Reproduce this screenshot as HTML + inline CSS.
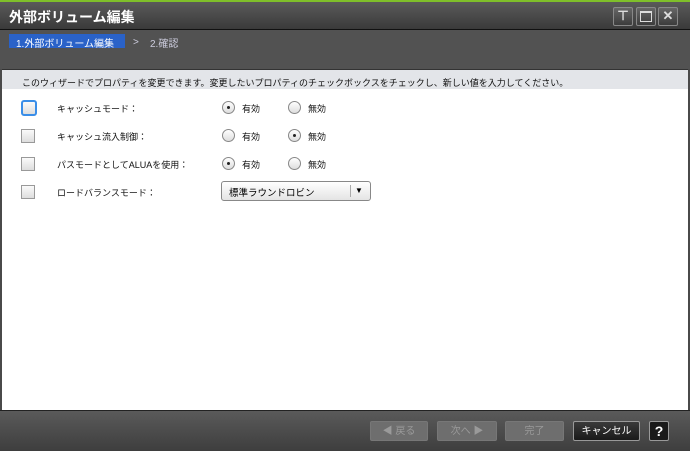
<!DOCTYPE html><html><head><meta charset="utf-8"><style>
*{box-sizing:border-box;margin:0;padding:0}
body{width:690px;height:451px;overflow:hidden;font-family:"Liberation Sans","Noto Sans CJK JP",sans-serif;font-size:10px;background:#4a4a4a;position:relative}
.a{position:absolute;white-space:nowrap}
.title{left:0;top:0;width:690px;height:30px;background:linear-gradient(#5a5a5a,#3a3a3a);border-top:2px solid #7fbf2a;border-bottom:1px solid #111}
.title span{position:absolute;left:9px;top:5px;color:#fff;font-size:14px;font-weight:bold}
.tb{top:7px;width:20px;height:19px;border:1px solid #888;background:linear-gradient(#666,#3c3c3c);border-radius:2px;color:#ddd;text-align:center;font-size:13px;line-height:16px;font-weight:bold}
.steps{left:0;top:30px;width:690px;height:39px;background:#525252}
.info{left:2px;top:69px;width:686px;height:20px;background:#e3e5e9;padding:6px 0 0 20px;font-size:9px;color:#111;border-top:1px solid #333}
.content{left:2px;top:89px;width:686px;height:321px;background:#fff}
.cb{width:14px;height:14px;border:1px solid #999;background:linear-gradient(#fafafa,#ddd)}
.lbl{color:#111;font-size:9px;margin-top:1px}
.rd{width:13px;height:13px;border:1px solid #888;border-radius:50%;background:linear-gradient(#fff,#ddd)}
.rd.on::after{content:"";position:absolute;left:4px;top:4px;width:3px;height:3px;background:#222;border-radius:50%}
.footer{left:0;top:410px;width:690px;height:41px;background:linear-gradient(#5a5a5a,#3e3e3e);border-top:1px solid #222}
.btn{top:421px;height:20px;border-radius:2px;text-align:center;line-height:19px;font-size:10px}
.dis{background:#6e6e6e;color:#9a9a9a;border:1px solid #777}
</style></head><body>
<div class="a title"><span>外部ボリューム編集</span></div>
<div class="a tb" style="left:613px">⊤</div>
<div class="a tb" style="left:636px"><span style="display:inline-block;width:12px;height:11px;border:1px solid #ddd;border-top-width:2px;margin-top:3px"></span></div>
<div class="a tb" style="left:658px">✕</div>
<div class="a steps"></div>
<div class="a" style="left:9px;top:34px;width:116px;height:14px;background:#2a62c8;color:#fff;font-size:10px;padding:1px 0 0 7px">1.外部ボリューム編集</div>
<div class="a" style="left:133px;top:37px;color:#ccd;font-size:10px">&gt;</div>
<div class="a" style="left:150px;top:35px;color:#ccd;font-size:10px">2.確認</div>
<div class="a info">このウィザードでプロパティを変更できます。変更したいプロパティのチェックボックスをチェックし、新しい値を入力してください。</div>
<div class="a content"></div>
<div class="a cb" style="left:21px;top:100px;border:2px solid #3a8ee8;border-radius:3px;width:16px;height:16px"></div>
<div class="a cb" style="left:21px;top:129px"></div>
<div class="a cb" style="left:21px;top:157px"></div>
<div class="a cb" style="left:21px;top:185px"></div>
<div class="a lbl" style="left:57px;top:101px">キャッシュモード：</div>
<div class="a lbl" style="left:57px;top:129px">キャッシュ流入制御：</div>
<div class="a lbl" style="left:57px;top:157px">パスモードとしてALUAを使用：</div>
<div class="a lbl" style="left:57px;top:185px">ロードバランスモード：</div>
<div class="a rd on" style="left:222px;top:101px"></div><div class="a lbl" style="left:242px;top:101px">有効</div>
<div class="a rd" style="left:288px;top:101px"></div><div class="a lbl" style="left:308px;top:101px">無効</div>
<div class="a rd" style="left:222px;top:129px"></div><div class="a lbl" style="left:242px;top:129px">有効</div>
<div class="a rd on" style="left:288px;top:129px"></div><div class="a lbl" style="left:308px;top:129px">無効</div>
<div class="a rd on" style="left:222px;top:157px"></div><div class="a lbl" style="left:242px;top:157px">有効</div>
<div class="a rd" style="left:288px;top:157px"></div><div class="a lbl" style="left:308px;top:157px">無効</div>
<div class="a" style="left:221px;top:181px;width:150px;height:20px;border:1px solid #888;border-radius:3px;background:linear-gradient(#fff,#e4e4e4);padding:3px 0 0 7px;font-size:9.5px">標準ラウンドロビン<span style="position:absolute;left:128px;top:3px;border-left:1px solid #aaa;height:12px"></span><span style="position:absolute;left:133px;top:4px;font-size:8px">▼</span></div>
<div class="a footer"></div>
<div class="a btn dis" style="left:370px;width:58px">◀ 戻る</div>
<div class="a btn dis" style="left:437px;width:60px">次へ ▶</div>
<div class="a btn dis" style="left:505px;width:59px">完了</div>
<div class="a btn" style="left:573px;width:67px;background:linear-gradient(#3a3a3a,#1a1a1a);border:1px solid #999;color:#fff">キャンセル</div>
<div class="a btn" style="left:649px;width:20px;background:#1a1a1a;border:1px solid #999;color:#fff;font-weight:bold;font-size:14px">?</div>
</body></html>
